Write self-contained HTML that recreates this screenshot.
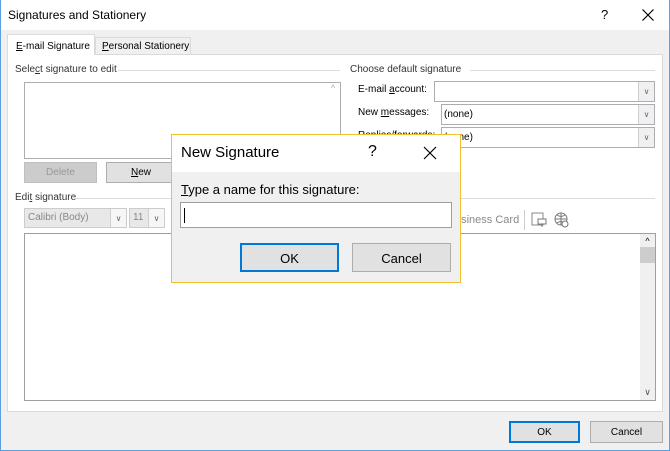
<!DOCTYPE html>
<html><head><style>
*{box-sizing:border-box;margin:0;padding:0}
body{width:670px;height:451px;overflow:hidden;font-family:"Liberation Sans",sans-serif;font-size:10px;color:#000;position:relative;background:#f0f0f0;white-space:nowrap}
.a{position:absolute}
.win{left:0;top:0;width:670px;height:451px;border:1px solid #5a9fe0;border-top:none;background:#f0f0f0}
.box{position:absolute;background:#fff;border:1px solid #abadb3}
.btn{position:absolute;background:#e1e1e1;border:1px solid #adadad;text-align:center}
.cb{position:absolute;right:0;top:0;bottom:0;width:16px;border-left:1px solid #d0d0d0;background:#f0f0f0;font-size:8px;color:#666;text-align:center;display:flex;align-items:center;justify-content:center}
.gl{position:absolute;height:1px;background:#dcdcdc}
</style></head><body>
<div class="a win"></div>
<div class="a" style="left:1px;top:0;width:668px;height:30px;background:#fff"></div>
<div class="a" style="left:8px;top:8px;font-size:12px">Signatures and Stationery</div>
<div class="a" style="left:601px;top:7px;font-size:13px">?</div>
<svg class="a" style="left:642px;top:9px" width="12" height="12"><path d="M0.5 0.5L11.5 11.5M11.5 0.5L0.5 11.5" stroke="#000" stroke-width="1.2"/></svg>
<!-- panel -->
<div class="a" style="left:7px;top:54px;width:656px;height:358px;background:#fff;border:1px solid #dadada"></div>
<div class="a" style="left:7px;top:34px;width:88px;height:21px;background:#fff;border:1px solid #dadada;border-bottom:none;padding:6px 0 0 8px;font-size:10px"><u>E</u>-mail Signature</div>
<div class="a" style="left:95px;top:37px;width:96px;height:17px;background:#f0f0f0;border:1px solid #dadada;border-bottom:none;padding:3px 0 0 6px;font-size:10px"><u>P</u>ersonal Stationery</div>
<div class="a" style="left:15px;top:64px;font-size:10px;color:#333">Sele<u>c</u>t signature to edit</div>
<div class="gl" style="left:118px;top:70px;width:222px"></div>
<div class="box" style="left:24px;top:82px;width:317px;height:77px"><div class="a" style="right:0;top:0;width:14px;height:75px;background:#fff;color:#aaa;font-size:9px;text-align:center">^</div></div>
<div class="btn" style="left:24px;top:162px;width:73px;height:21px;color:#999;background:#ccc;border-color:#bfbfbf;padding-top:4px;font-size:10px">Delete</div>
<div class="btn" style="left:106px;top:162px;width:70px;height:21px;padding-top:4px;font-size:10px"><u>N</u>ew</div>
<div class="a" style="left:15px;top:192px;font-size:10px;color:#333">Edi<u>t</u> signature</div>
<div class="gl" style="left:76px;top:198px;width:95px"></div>
<div class="gl" style="left:460px;top:198px;width:195px"></div>
<div class="a" style="left:24px;top:208px;width:103px;height:20px;background:#e8e8e8;border:1px solid #ccc;color:#888;padding:3px 3px;font-size:10px">Calibri (Body)<div class="cb" style="background:#f6f6f6">∨</div></div>
<div class="a" style="left:129px;top:208px;width:36px;height:20px;background:#e8e8e8;border:1px solid #ccc;color:#888;padding:3px 3px;font-size:10px">11<div class="cb" style="background:#f6f6f6">∨</div></div>
<div class="a" style="left:455px;top:214px;font-size:11px;color:#888">usiness Card</div>
<div class="a" style="left:524px;top:210px;width:1px;height:20px;background:#ccc"></div>
<svg class="a" style="left:530px;top:211px" width="18" height="18"><rect x="2" y="2" width="11" height="12" fill="none" stroke="#888"/><rect x="8" y="8" width="8" height="5" fill="#fff" stroke="#777"/><line x1="12" y1="13" x2="12" y2="16" stroke="#777"/></svg>
<svg class="a" style="left:553px;top:211px" width="18" height="18"><circle cx="8" cy="8" r="6" fill="none" stroke="#777"/><path d="M2 8h12M8 2v12M4 4c3 2 5 2 8 0M4 12c3-2 5-2 8 0" fill="none" stroke="#777"/><circle cx="12" cy="13" r="3" fill="#fff" stroke="#777"/></svg>
<div class="box" style="left:24px;top:233px;width:632px;height:168px;border-color:#a0a0a0"><div class="a" style="right:0;top:0;width:15px;height:166px;background:#f0f0f0;font-size:9px;text-align:center"><div style="margin-top:2px">^</div><div style="background:#cdcdcd;height:16px;margin-top:1px"></div><div class="a" style="bottom:2px;width:15px;color:#555">∨</div></div></div>
<!-- right -->
<div class="a" style="left:350px;top:64px;font-size:10px;color:#333">Choose default signature</div>
<div class="gl" style="left:470px;top:70px;width:185px"></div>
<div class="a" style="left:358px;top:84px;font-size:10px">E-mail <u>a</u>ccount:</div>
<div class="box" style="left:434px;top:81px;width:221px;height:21px"><div class="cb">∨</div></div>
<div class="a" style="left:358px;top:107px;font-size:10px">New <u>m</u>essages:</div>
<div class="box" style="left:441px;top:104px;width:214px;height:21px;padding:4px 2px;font-size:10px">(none)<div class="cb">∨</div></div>
<div class="a" style="left:358px;top:130px;font-size:10px">Replies/forwards:</div>
<div class="box" style="left:441px;top:127px;width:214px;height:21px;padding:4px 2px;font-size:10px">(none)<div class="cb">∨</div></div>
<!-- bottom -->
<div class="btn" style="left:509px;top:421px;width:71px;height:22px;border:2px solid #0078d7;padding-top:4px;font-size:10px">OK</div>
<div class="btn" style="left:590px;top:421px;width:73px;height:22px;padding-top:5px;font-size:10px">Cancel</div>
<!-- modal -->
<div class="a" style="left:171px;top:134px;width:290px;height:149px;background:#f0f0f0;border:1px solid #f0c030"></div>
<div class="a" style="left:172px;top:135px;width:288px;height:37px;background:#fff"></div>
<div class="a" style="left:181px;top:144px;font-size:15px">New Signature</div>
<div class="a" style="left:368px;top:143px;font-size:16px">?</div>
<svg class="a" style="left:423px;top:146px" width="14" height="14"><path d="M1 1L13 13M13 1L1 13" stroke="#000" stroke-width="1.2"/></svg>
<div class="a" style="left:181px;top:182px;font-size:13px"><u>T</u>ype a name for this signature:</div>
<div class="a" style="left:180px;top:202px;width:272px;height:26px;background:#fff;border:1px solid #a0a0a0"><div class="a" style="left:3px;top:5px;width:1px;height:15px;background:#000"></div></div>
<div class="btn" style="left:240px;top:243px;width:99px;height:29px;border:2px solid #0078d7;padding-top:6px;font-size:13px">OK</div>
<div class="btn" style="left:352px;top:243px;width:99px;height:29px;padding-top:7px;font-size:13px">Cancel</div>
</body></html>
